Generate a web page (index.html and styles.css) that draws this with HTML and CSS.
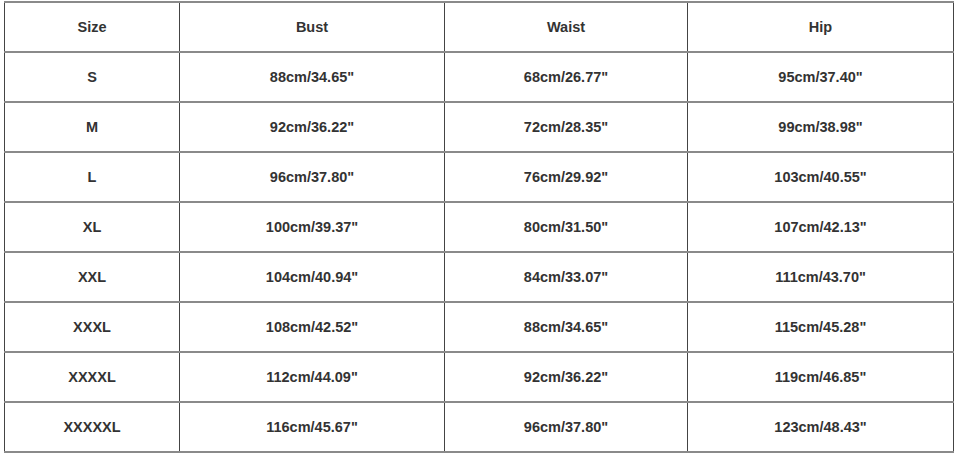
FILE: index.html
```html
<!DOCTYPE html>
<html>
<head>
<meta charset="utf-8">
<link rel="stylesheet" href="styles.css">
</head>
<body>
<table class="chart">
<colgroup><col class="c-size"><col class="c-bust"><col class="c-waist"><col class="c-hip"></colgroup>
<tr><th>Size</th><th>Bust</th><th>Waist</th><th>Hip</th></tr>
<tr><td>S</td><td>88cm/34.65"</td><td>68cm/26.77"</td><td>95cm/37.40"</td></tr>
<tr><td>M</td><td>92cm/36.22"</td><td>72cm/28.35"</td><td>99cm/38.98"</td></tr>
<tr><td>L</td><td>96cm/37.80"</td><td>76cm/29.92"</td><td>103cm/40.55"</td></tr>
<tr><td>XL</td><td>100cm/39.37"</td><td>80cm/31.50"</td><td>107cm/42.13"</td></tr>
<tr><td>XXL</td><td>104cm/40.94"</td><td>84cm/33.07"</td><td>111cm/43.70"</td></tr>
<tr><td>XXXL</td><td>108cm/42.52"</td><td>88cm/34.65"</td><td>115cm/45.28"</td></tr>
<tr><td>XXXXL</td><td>112cm/44.09"</td><td>92cm/36.22"</td><td>119cm/46.85"</td></tr>
<tr><td>XXXXXL</td><td>116cm/45.67"</td><td>96cm/37.80"</td><td>123cm/48.43"</td></tr>
</table>
</body>
</html>
```
FILE: styles.css
```css
html, body {
  margin: 0;
  padding: 0;
  background: #fff;
}
body {
  padding: 1px 0 0 4px;
}
.chart {
  border-collapse: collapse;
  table-layout: fixed;
  width: 949px;
  font-family: "Liberation Sans", Arial, sans-serif;
  font-weight: bold;
  font-size: 14.5px;
  color: #333;
}
.c-size { width: 175px; }
.c-bust { width: 265px; }
.c-waist { width: 243px; }
.c-hip { width: 266px; }
.chart th, .chart td {
  height: 48px;
  padding: 0;
  text-align: center;
  vertical-align: middle;
  border-left: 1.5px solid #444;
  border-right: 1.5px solid #444;
  border-top: 2px solid #8a8a8a;
  border-bottom: 2px solid #8a8a8a;
}
.chart th {
  font-weight: bold;
}
```
